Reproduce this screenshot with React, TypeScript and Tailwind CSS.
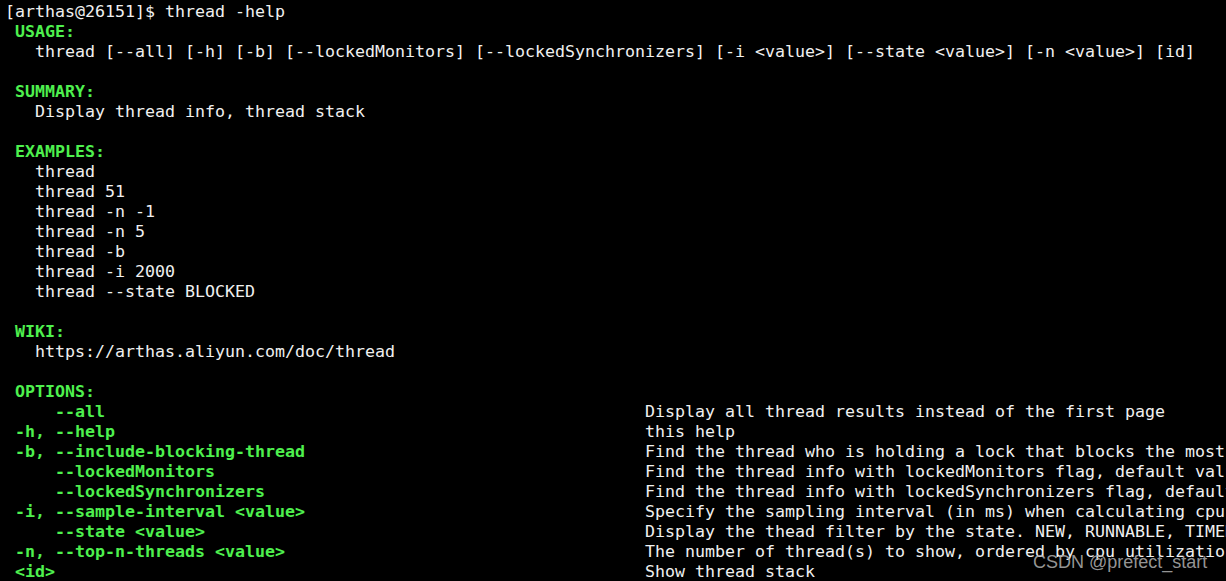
const usage =
  "thread [--all] [-h] [-b] [--lockedMonitors] [--lockedSynchronizers] [-i <value>] [--state <value>] [-n <value>] [id]"

const examples = [
  "thread",
  "thread 51",
  "thread -n -1",
  "thread -n 5",
  "thread -b",
  "thread -i 2000",
  "thread --state BLOCKED",
]

const options = [
  ["    --all", "Display all thread results instead of the first page"],
  ["-h, --help", "this help"],
  ["-b, --include-blocking-thread", "Find the thread who is holding a lock that blocks the most number of threads."],
  ["    --lockedMonitors", "Find the thread info with lockedMonitors flag, default value is false."],
  ["    --lockedSynchronizers", "Find the thread info with lockedSynchronizers flag, default value is false."],
  ["-i, --sample-interval <value>", "Specify the sampling interval (in ms) when calculating cpu usage."],
  ["    --state <value>", "Display the thead filter by the state. NEW, RUNNABLE, TIMED_WAITING, WAITING, BLOCKED, TERMINATED is optional."],
  ["-n, --top-n-threads <value>", "The number of thread(s) to show, ordered by cpu utilization, -1 to show all."],
  ["<id>", "Show thread stack"],
]

function Head({ children }: { children: string }) {
  return <div className="pl-[10px] font-bold text-[#4ef04e]">{children}</div>
}

function Line({ children }: { children: string }) {
  return <div className="pl-[30px]">{children}</div>
}

function Blank() {
  return <div className="h-5" />
}

export default function App() {
  return (
    <div className="relative h-[581px] w-[1226px] overflow-hidden bg-black">
      <div
        className="whitespace-pre pl-[5px] pt-[2px] text-[16.61px] leading-5 text-[#f0f0f0]"
        style={{ fontFamily: '"DejaVu Sans Mono", monospace' }}
      >
        <div>[arthas@26151]$ thread -help</div>
        <Head>USAGE:</Head>
        <Line>{usage}</Line>
        <Blank />
        <Head>SUMMARY:</Head>
        <Line>Display thread info, thread stack</Line>
        <Blank />
        <Head>EXAMPLES:</Head>
        {examples.map((e) => (
          <Line key={e}>{e}</Line>
        ))}
        <Blank />
        <Head>WIKI:</Head>
        <Line>https://arthas.aliyun.com/doc/thread</Line>
        <Blank />
        <Head>OPTIONS:</Head>
        {options.map(([flag, desc]) => (
          <div key={flag} className="flex">
            <div className="w-[640px] shrink-0 pl-[10px] font-bold text-[#4ef04e]">{flag}</div>
            <div>{desc}</div>
          </div>
        ))}
      </div>
      <div
        className="absolute left-[1033px] top-[550px] text-[18px] leading-6 text-[#a8a8a8]/90"
        style={{ fontFamily: '"Liberation Sans", Arial, sans-serif' }}
      >
        CSDN @prefect_start
      </div>
    </div>
  )
}
